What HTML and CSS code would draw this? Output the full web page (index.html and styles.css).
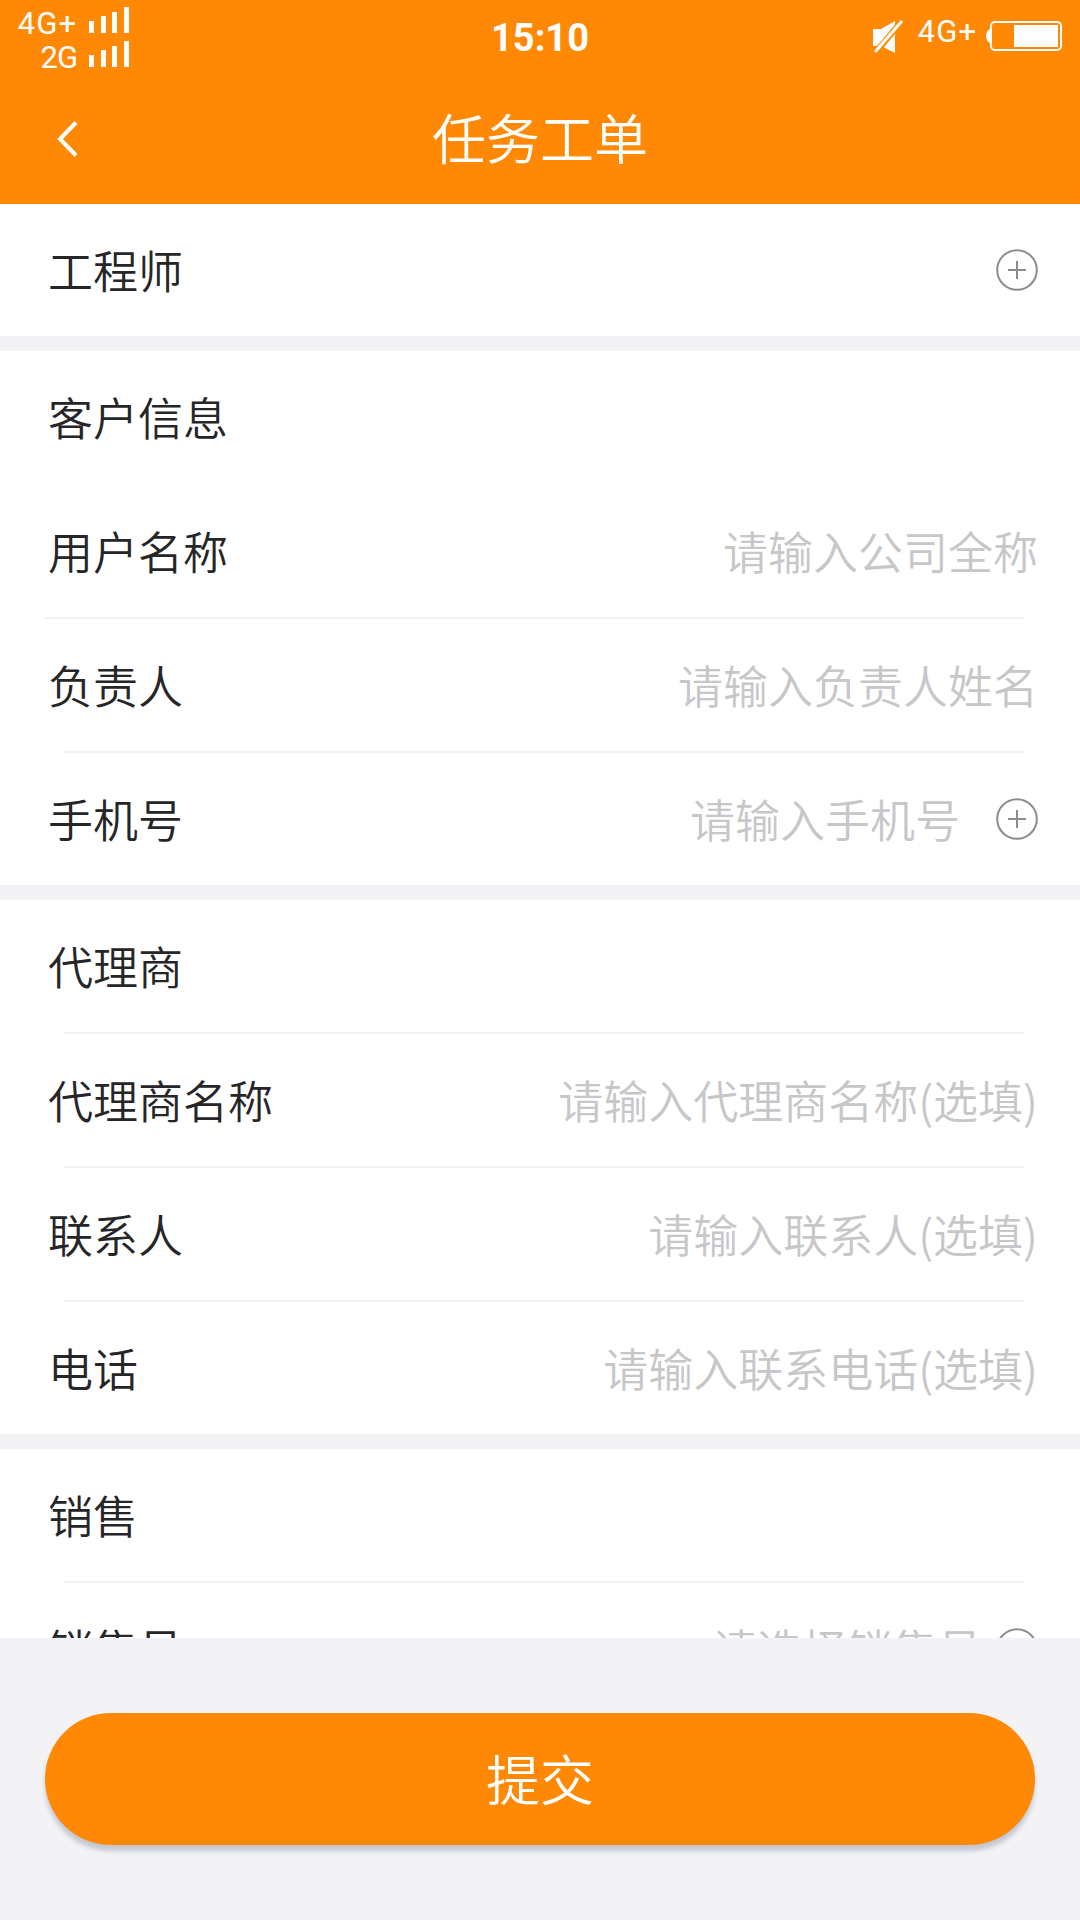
FILE: index.html
```
<!DOCTYPE html>
<html lang="zh-CN">
<head>
  <meta charset="UTF-8" />
  <meta name="viewport" content="width=device-width, initial-scale=1.0" />
  <title>任务工单</title>
  <link rel="stylesheet" href="styles.css">
</head>
<body>
  <div class="page">
    <header class="header">
      <div class="status-bar">
        <div class="carriers">
          <div class="carrier">
            <span class="network">4G+</span>
            <svg class="signal" width="40" height="26" viewBox="0 0 40 26" fill="#fff">
              <path d="M0 14h5v12H0zM12 9h5v17h-5zM23 5h5v21h-5zM35 0h5v26h-5z" />
            </svg>
          </div>
          <div class="carrier">
            <span class="network-2g">2G</span>
            <svg class="signal" width="40" height="26" viewBox="0 0 40 26" fill="#fff">
              <path d="M0 14h5v12H0zM12 9h5v17h-5zM23 5h5v21h-5zM35 0h5v26h-5z" />
            </svg>
          </div>
        </div>
        <div class="time">15:10</div>
        <div class="status-right">
          <svg class="mute" width="32" height="34" viewBox="0 0 32 34">
            <path d="M1 9h8L23 1v32L9 26H1z" fill="#fff" />
            <path d="M4 32L30 1" stroke="#ff8805" stroke-width="6" />
            <path d="M3 32L30 1" stroke="#fff" stroke-width="3" />
          </svg>
          <span class="network">4G+</span>
          <svg class="battery" width="78" height="32" viewBox="0 0 78 32">
            <path d="M5 9v14q-4-2-4-7t4-7z" fill="#fff" />
            <rect x="6" y="2" width="70" height="28" rx="4" fill="none" stroke="#fff" stroke-width="2" />
            <rect x="29" y="5" width="44" height="22" fill="#fff" />
          </svg>
        </div>
      </div>
      <div class="nav-bar">
        <a class="back" href="#">
          <svg width="22" height="38" viewBox="0 0 22 38" fill="none" stroke="#fff" stroke-width="4">
            <path d="M20 2.500L4 19L20 35.500" />
          </svg>
        </a>
        <h1 class="title">任务工单</h1>
      </div>
    </header>

    <main class="form">
      <section class="group">
        <div class="row">
          <span class="label">工程师</span>
          <svg class="add" viewBox="0 0 42 42"><circle cx="21" cy="21" r="19.800" /><path d="M21 12v18M12 21h18" /></svg>
        </div>
      </section>

      <section class="group">
        <div class="row no-line"><span class="label">客户信息</span></div>
        <div class="row line-full">
          <label class="label" for="company">用户名称</label>
          <input id="company" type="text" placeholder="请输入公司全称" />
        </div>
        <div class="row">
          <label class="label" for="owner">负责人</label>
          <input id="owner" type="text" placeholder="请输入负责人姓名" />
        </div>
        <div class="row">
          <label class="label" for="mobile">手机号</label>
          <input id="mobile" class="with-add" type="text" placeholder="请输入手机号" />
          <svg class="add" viewBox="0 0 42 42"><circle cx="21" cy="21" r="19.800" /><path d="M21 12v18M12 21h18" /></svg>
        </div>
      </section>

      <section class="group">
        <div class="row"><span class="label">代理商</span></div>
        <div class="row">
          <label class="label" for="agent">代理商名称</label>
          <input id="agent" type="text" placeholder="请输入代理商名称(选填)" />
        </div>
        <div class="row">
          <label class="label" for="contact">联系人</label>
          <input id="contact" type="text" placeholder="请输入联系人(选填)" />
        </div>
        <div class="row">
          <label class="label" for="phone">电话</label>
          <input id="phone" type="text" placeholder="请输入联系电话(选填)" />
        </div>
      </section>

      <section class="group">
        <div class="row"><span class="label">销售</span></div>
        <div class="row">
          <label class="label" for="sales">销售员</label>
          <input id="sales" class="with-select" type="text" placeholder="请选择销售员" />
          <svg class="add" viewBox="0 0 42 42"><circle cx="21" cy="21" r="19.800" /><path d="M21 12v18M12 21h18" /></svg>
        </div>
      </section>
    </main>

    <footer class="footer">
      <button class="submit" type="button">提交</button>
    </footer>
  </div>
</body>
</html>
```

FILE: styles.css
```
* {
  box-sizing: border-box;
}
body {
  margin: 0;
  font-family: "Noto Sans CJK SC", sans-serif;
  background: #f3f3f5;
  color: #262628;
}
.page {
  display: flex;
  flex-direction: column;
  height: 1920px;
  overflow: hidden;
}

/* header */
.header {
  height: 204px;
  flex-shrink: 0;
  background: #ff8805;
  color: #fff;
}
.status-bar {
  display: grid;
  grid-template-columns: 1fr auto 1fr;
  height: 74px;
  font-family: Roboto, sans-serif;
  font-size: 31px;
}
.carriers {
  width: 129px;
  padding-top: 6px;
}
.carrier {
  display: flex;
  justify-content: flex-end;
  gap: 12px;
  height: 34px;
  line-height: 36px;
}
.network {
  letter-spacing: 1px;
}
.network-2g {
  font-size: 31px;
  letter-spacing: -1px;
}
.signal {
  margin-top: 1px;
}
.time {
  padding-top: 16px;
  font-size: 38px;
  font-weight: bold;
  line-height: 45px;
}
.status-right {
  display: flex;
  justify-content: flex-end;
  padding: 19px 17px 0 0;
}
.status-right .network {
  margin: -5px 8px 0 14px;
  line-height: 36px;
}
.mute {
  margin-top: 1px;
}
.battery {
  margin-top: 1px;
}
.nav-bar {
  display: grid;
  grid-template-columns: 140px 1fr 140px;
  align-items: center;
  height: 130px;
}
.back {
  display: flex;
  margin: 0 0 1px 56px;
}
.title {
  margin: 0 0 4px;
  font-size: 54px;
  font-weight: 350;
  line-height: 80px;
  text-align: center;
}

/* form */
.form {
  height: 1434px;
  flex-shrink: 0;
  overflow: hidden;
}
.group {
  margin-bottom: 15px;
  background: #fff;
}
.row {
  display: flex;
  align-items: center;
  justify-content: space-between;
  height: 134px;
  padding: 0 42px 2px 48px;
  font-size: 45px;
  font-weight: 350;
  background: linear-gradient(#f3f3f5, #f3f3f5) 64px 100% / 960px 2px no-repeat;
}
.row:last-child {
  height: 132px;
  padding-bottom: 0;
  background: none;
}
.row.line-full {
  background-position: 45px 100%;
  background-size: 979px 2px;
}
.row.no-line {
  background: none;
}
.label {
  flex-shrink: 0;
  padding-bottom: 2px;
}
.row input {
  flex: 1;
  min-width: 0;
  height: 80px;
  padding: 0 0 2px;
  border: none;
  outline: none;
  background: none;
  font: inherit;
  color: #262628;
  text-align: right;
}
.row input::placeholder {
  color: #c7c7c9;
}
.row .with-add {
  margin-right: 36px;
}
.row .with-select {
  margin-right: 14px;
}
.add {
  width: 42px;
  height: 42px;
  flex-shrink: 0;
  fill: none;
  stroke: #8c8c8e;
  stroke-width: 2;
}

/* footer */
.footer {
  flex: 1;
  padding: 75px 45px 0;
}
.submit {
  display: block;
  width: 100%;
  height: 132px;
  padding: 0 0 3px;
  border: none;
  border-radius: 66px;
  background: #ff8805;
  color: #fff;
  font-family: inherit;
  font-size: 54px;
  font-weight: 350;
  box-shadow: 0 6px 4px rgba(60, 70, 110, 0.25);
}
```
